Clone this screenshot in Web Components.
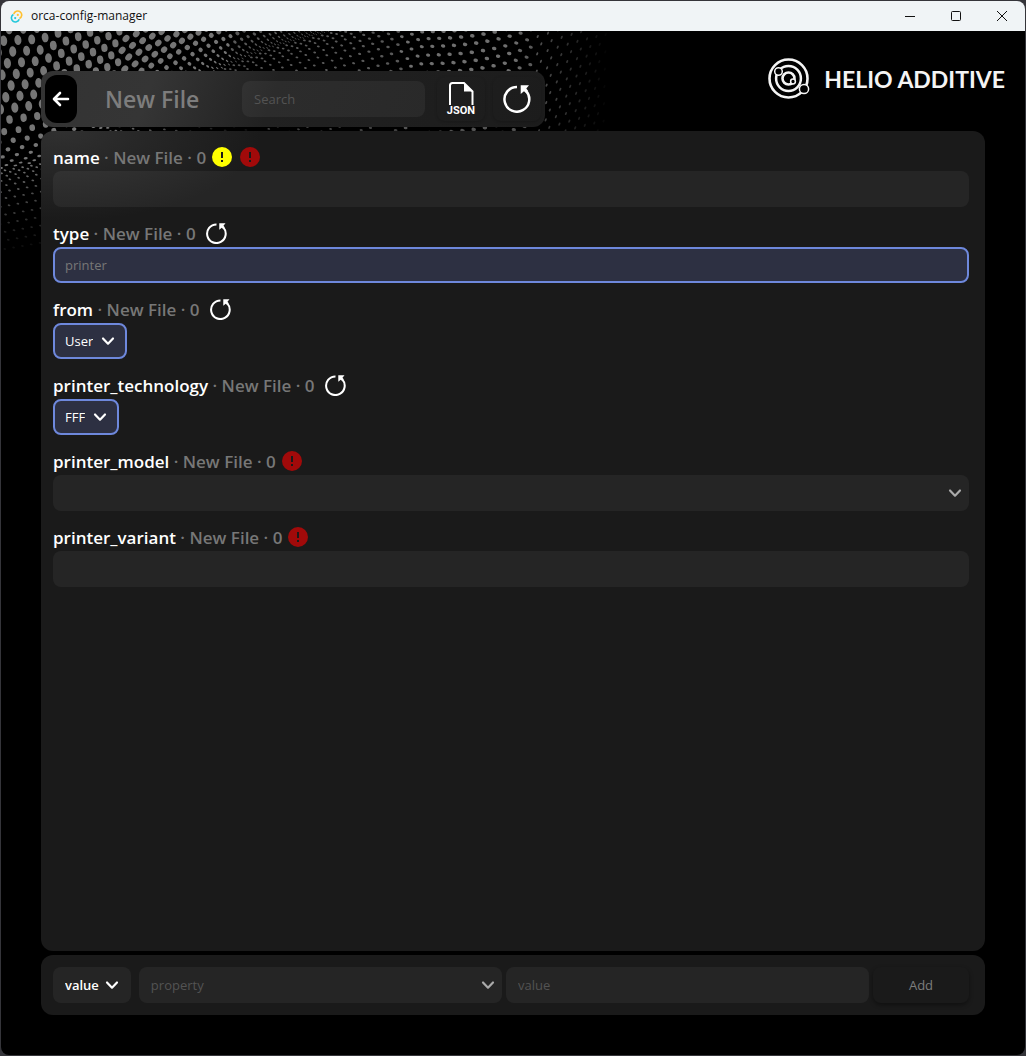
<!DOCTYPE html>
<html lang="en">
<head>
<meta charset="utf-8">
<title>orca-config-manager</title>
<style>
html,body{margin:0;height:100%;background:#2b2b2f}
body{font-family:"Open Sans","Noto Sans","Liberation Sans",sans-serif;color:#fff}
</style>
</head>
<body>
<app-window heading="orca-config-manager">
  <dot-wave slot="backdrop"></dot-wave>
  <brand-logo slot="brand"></brand-logo>
  <file-toolbar heading="New File"></file-toolbar>
  <property-panel>
    <property-row name="name" file="New File" level="0" flags="warn error"></property-row>
    <property-row name="type" file="New File" level="0" flags="reset" hint="printer" changed></property-row>
    <property-row name="from" file="New File" level="0" flags="reset" kind="select" value="User" changed></property-row>
    <property-row name="printer_technology" file="New File" level="0" flags="reset" kind="select" value="FFF" changed></property-row>
    <property-row name="printer_model" file="New File" level="0" flags="error" kind="combo"></property-row>
    <property-row name="printer_variant" file="New File" level="0" flags="error"></property-row>
  </property-panel>
  <add-property-bar></add-property-bar>
</app-window>
<script>
const controls = `
  *{box-sizing:border-box}
  button,input,select{font:inherit;font-size:13px;line-height:20px;color:#fff;border:0;margin:0;outline:0;background:none}
  button{cursor:pointer;padding:0}
  input,select{height:36px;border-radius:8px;padding:0 12px;background:#ffffff0d}
  input{width:100%;min-width:0;display:block}
  input::placeholder{color:#535353;opacity:1}
  select{appearance:none;field-sizing:content;padding:0 32px 0 12px;display:block}
  option{background:#262626}
  .pick{position:relative;display:block}
  .pick svg{position:absolute;right:12px;top:50%;margin-top:-6px;pointer-events:none}
  .pick.wide svg{right:6px}
  svg{display:block}
`;
const chevron = (c, w = 14) => `<svg width="${w}" height="12" viewBox="0 0 14 12" fill="none" stroke="${c}" stroke-width="2.2" stroke-linecap="round" stroke-linejoin="round" aria-hidden="true"><path d="M2 3.5 7 8.7 12 3.5"/></svg>`;
const resetIcon = (s, w) => `<svg width="${s}" height="${s}" viewBox="0 0 28 28" fill="none" aria-hidden="true"><path d="M14 1.9A12.4 12.4 0 1 0 23 5.9" stroke="#fff" stroke-width="${w}"/><path d="M17.7.2H26L23.3 3.6 25 5.8 22.6 7.8 21 6.2 17.7 9Z" fill="#fff"/></svg>`;

class View extends HTMLElement {
  connectedCallback() {
    if (!this.shadowRoot) this.attachShadow({mode: 'open'});
    this.shadowRoot.innerHTML = `<style>${controls}${this.css()}</style>${this.html()}`;
  }
  at(n) { return this.getAttribute(n) || ''; }
}

customElements.define('app-window', class extends View {
  css() { return `
    :host{display:flex;flex-direction:column;min-height:100vh;box-sizing:border-box;padding:1px;background:#35353a}
    header{display:flex;align-items:center;height:30px;background:#f0f4f6;color:#111;border-radius:8px 8px 0 0;padding-left:9px;flex:none}
    header h1{font-size:12px;line-height:16px;font-weight:400;margin:0 auto 0 8px}
    header button{width:46px;height:30px;display:grid;place-items:center}
    header nav{display:flex}
    main{position:relative;flex:1;display:flex;flex-direction:column;gap:4px;padding:40px;background:#000;border-radius:0 0 8px 8px;overflow:hidden}
    .brand{position:absolute;right:20px;top:27px}
    ::slotted(dot-wave){position:absolute;left:0;top:0}
  `; }
  html() { return `
    <header>
      <svg width="13" height="13" viewBox="0 0 13 13" fill="none" stroke-width="1.6" aria-hidden="true">
        <path d="M3.8 4.2A4 4 0 1 1 9.4 8.6" stroke="#ffc131"/><path d="M3.4 4.5A4 4 0 1 0 9.2 9.2" stroke="#24c8db"/>
        <circle cx="7.8" cy="4.9" r="1.1" fill="#ffc131"/><circle cx="5.2" cy="8.1" r="1.1" fill="#24c8db"/>
      </svg>
      <h1>${this.at('heading')}</h1>
      <nav aria-label="Window">
        <button aria-label="Minimize"><svg width="10" height="10" stroke="#111"><path d="M0 5.5H10"/></svg></button>
        <button aria-label="Maximize"><svg width="10" height="10" fill="none" stroke="#111"><rect x=".5" y=".5" width="9" height="9" rx="1"/></svg></button>
        <button aria-label="Close"><svg width="10" height="10" stroke="#111"><path d="M0 0 10 10M10 0 0 10"/></svg></button>
      </nav>
    </header>
    <main><slot name="backdrop"></slot><div class="brand"><slot name="brand"></slot></div><slot></slot></main>
  `; }
});

/* Halftone cloth: one lattice above the fold, a finer one that fades out beneath it. */
customElements.define('dot-wave', class extends View {
  css() { return `:host{display:block}`; }
  html() {
    const knots = [[-60,142],[0,138],[40,131],[110,98],[215,40],[265,18],[330,0],[420,-22],[640,-60]];
    const fold = x => {
      for (let i = 1; i < knots.length; i++) if (x <= knots[i][0]) {
        const [x0,y0] = knots[i-1], [x1,y1] = knots[i];
        return y0 + (y1 - y0) * (x - x0) / (x1 - x0);
      }
      return -60;
    };
    let out = '';
    const dot = (x, y, rx, ry, a, o) => {
      if (x > -5 && y > -5 && y < 245) out += `<ellipse cx="${x.toFixed(1)}" cy="${y.toFixed(1)}" rx="${rx.toFixed(2)}" ry="${ry.toFixed(2)}" transform="rotate(${a.toFixed(0)} ${x.toFixed(1)} ${y.toFixed(1)})" opacity="${o.toFixed(2)}"/>`;
    };
    /* Column n of the lattice sits at a fixed x; columns tighten toward the right. */
    const column = n => n < 0 ? n * 14.6 : 440 * (1 - Math.exp(-n * 14.6 / 440));
    let h = 1;
    for (let j = 0; j < 20; j++) {
      for (let i = -2; i < 44; i++) {
        const x = column(i + (j * .37) % 1);
        if (x > 340) break;
        const t = Math.max(0, x) / 300;
        const y = fold(x) - h * (1 - t * .3);
        const g = Math.min(1, h / 60);
        dot(x, y, (1.9 + g * 1.7) * (1 - t * .35), (.8 + g * 4.5) * (1 - t * .62), x > 120 ? 40 : -6, x > 230 ? .75 : 1);
      }
      h += Math.min(11.4, 2 + j * 1.6);
    }
    h = 2;
    for (let j = 0; j < 22; j++) {
      const step = Math.min(8.6, 2.4 + j * .9);
      let x = -40 + (j * 5.3) % 11;
      while (x < 612) {
        const bump = Math.exp(-(((x - 475) / 95) ** 2));
        const y = fold(x) + h + (x > 420 ? Math.sin((x - 420) / 40) * 6 : 0);
        const fadeY = x < 250 ? Math.max(0, 1 - h / 92) : 1 - Math.max(0, y - 70) / 110;
        const fadeX = x > 510 ? Math.max(0, 1 - (x - 510) / 100) : 1;
        const o = Math.max(0, fadeY * fadeX) * (x > 200 && x < 400 ? .75 : .95);
        if (o > .05) dot(x, y, x > 530 ? .9 : 1.4 + bump * .9, x > 530 ? 1.7 : .9 + bump * .9, x > 530 ? 25 : 10, o);
        x += 8.8 + bump * 2.4;
      }
      h += step;
    }
    return `<svg width="620" height="250" fill="#757575" aria-hidden="true">${out}</svg>`;
  }
});

customElements.define('brand-logo', class extends View {
  css() { return `
    :host{display:flex;align-items:center;gap:14px;height:42px}
    span{font:700 23px/28px Lato,"Open Sans",sans-serif;color:#f4f4f4;white-space:nowrap}
  `; }
  html() { return `
    <svg width="42" height="42" viewBox="0 0 42 42" fill="none" stroke="#f4f4f4" aria-hidden="true">
      <circle cx="20.5" cy="20.5" r="19" stroke-width="2.6"/>
      <circle cx="20.5" cy="20.5" r="12.4" stroke-width="2.5"/>
      <circle cx="20.5" cy="20.5" r="6" stroke-width="2.6"/>
      <g fill="#000" stroke-width="1.5"><circle cx="10.5" cy="13.5" r="3.8"/><circle cx="25" cy="23.5" r="2.4"/><circle cx="36" cy="31" r="4.6"/></g>
    </svg>
    <span>HELIO ADDITIVE</span>
  `; }
});

customElements.define('file-toolbar', class extends View {
  css() { return `
    :host{position:relative;display:flex;align-items:center;align-self:flex-start;width:504px;max-width:100%;height:56px;box-sizing:border-box;padding:4px;border-radius:12px;
      background:linear-gradient(110deg,#333 0,#353535 22%,#212121 46%,#1c1c1c 100%)}
    .back{width:32px;height:48px;border-radius:12px;background:#000;display:grid;place-items:center;flex:none}
    h2{font-size:23px;line-height:32px;font-weight:600;color:#7d7d7d;margin:0 auto 0 28px;white-space:nowrap}
    .search{width:183px;margin-right:4px}
    .tool{width:48px;height:44px;border-radius:8px;display:grid;place-items:center;box-shadow:0 1px 3px #0003;margin-left:8px}
    .json{display:flex;flex-direction:column;align-items:center;justify-content:center;font-size:11px;line-height:11px;font-family:Roboto,sans-serif;font-weight:700}
  `; }
  html() { return `
    <button class="back" aria-label="Back"><svg width="18" height="16" viewBox="0 0 18 16" fill="none" stroke="#fff" stroke-width="2.6" stroke-linecap="round" stroke-linejoin="round"><path d="M16 8H2.5M8 2 2 8 8 14"/></svg></button>
    <h2>${this.at('heading')}</h2>
    <div class="search"><input type="search" placeholder="Search" aria-label="Search"></div>
    <button class="tool json"><svg width="26" height="23" viewBox="0 0 26 23" fill="none" aria-hidden="true"><path d="M2 23V3.5Q2 1 4.500 1H16L24.500 9.500V23" stroke="#fff" stroke-width="2"/><path d="M16 1V9.500H25Z" fill="#fff"/></svg>JSON</button>
    <button class="tool" aria-label="Reset all"><span>${resetIcon(28, 2.5)}</span></button>
  `; }
});

customElements.define('property-panel', class extends View {
  css() { return `
    :host{position:relative;flex:1;display:flex;flex-direction:column;gap:12px;padding:12px 16px 12px 12px;border-radius:12px;
      background:radial-gradient(ellipse 200px 90px at 20px 0,#303030,#1a1a1a) #1a1a1a}
  `; }
  html() { return `<slot></slot>`; }
});

customElements.define('property-row', class extends View {
  css() { return `
    :host{display:block}
    .head{display:flex;align-items:center;height:28px;font-size:17px;line-height:24px;font-weight:600;color:#777;white-space:pre}
    label,.origin{padding-top:2px}
    label{color:#fff}
    .marks{display:flex;align-items:center;gap:8px;margin-left:6px}
    .marks button{margin-left:4px}
    .changed input,.changed select{background:#2d3042;border:2px solid #6e88dc;padding-left:10px}
    .changed input::placeholder{color:#777}
    .pick{width:max-content}
    .pick.wide{width:auto}
  `; }
  html() {
    const mark = c => `<svg width="20" height="20" role="img" aria-label="${c === '#ff0' ? 'Warning' : 'Error'}"><circle cx="10" cy="10" r="10" fill="${c}"/><path d="M10 5v6M10 13v2" stroke="#1a1a1a" stroke-width="2"/></svg>`;
    const marks = this.at('flags').split(' ').map(f => ({
      warn: mark('#ff0'), error: mark('#a10a0a'),
      reset: `<button aria-label="Reset ${this.at('name')}">${resetIcon(21, 2.7)}</button>`
    })[f]).join('');
    const kind = this.at('kind');
    const field = kind === 'select'
      ? `<div class="pick"><select id="f"><option>${this.at('value')}</option></select>${chevron('#fff')}</div>`
      : kind === 'combo'
      ? `<div class="pick wide"><input id="f" role="combobox" aria-expanded="false">${chevron('#aaa', 16)}</div>`
      : `<input id="f" placeholder="${this.at('hint')}">`;
    return `<div class="head"><label for="f">${this.at('name')}</label><span class="origin"> · ${this.at('file')} · ${this.at('level')}</span><span class="marks">${marks}</span></div>
      <div class="${this.hasAttribute('changed') ? 'changed' : ''}">${field}</div>`;
  }
});

customElements.define('add-property-bar', class extends View {
  css() { return `
    :host{position:relative;display:flex;gap:4px;padding:12px 16px 12px 12px;border-radius:12px;background:#1a1a1a}
    .type{margin-right:4px}
    .type select{font-weight:600}
    .grow{flex:1}
    .add{width:96px;height:36px;border-radius:8px;color:#7d7d7d;box-shadow:0 2px 4px #0006}
  `; }
  html() { return `
    <div class="pick type"><select aria-label="Kind"><option>value</option></select>${chevron('#fff')}</div>
    <div class="pick wide grow"><input placeholder="property" aria-label="Property" role="combobox" aria-expanded="false">${chevron('#aaa', 16)}</div>
    <div class="grow"><input placeholder="value" aria-label="Value"></div>
    <button class="add">Add</button>
  `; }
});
</script>
</body>
</html>
